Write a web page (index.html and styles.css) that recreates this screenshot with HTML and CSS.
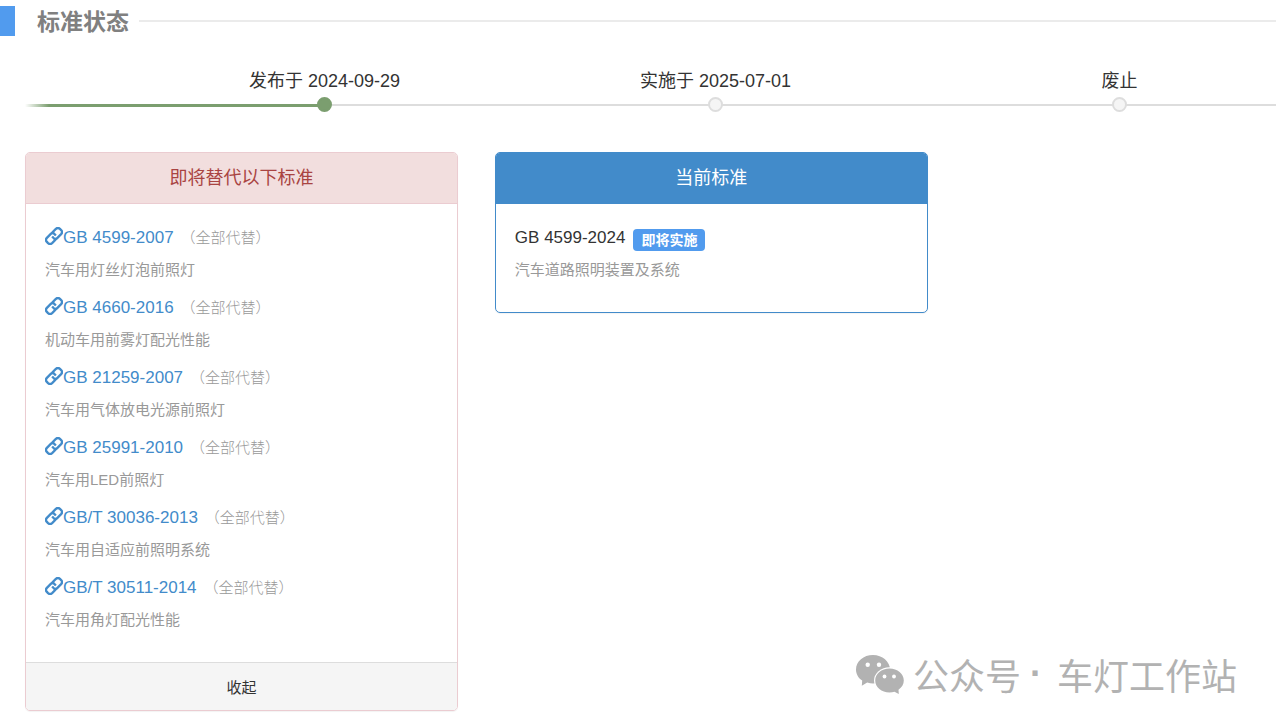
FILE: index.html
```html
<!DOCTYPE html>
<html lang="zh-CN">
<head>
<meta charset="utf-8">
<meta name="viewport" content="width=device-width, initial-scale=1">
<title>标准状态</title>
<link rel="stylesheet" href="styles.css">
</head>
<body>
<svg class="sprite" aria-hidden="true">
  <symbol id="chain" viewBox="0.5 0.5 23 23">
    <g fill="none" stroke="currentColor" stroke-width="3" stroke-linejoin="round">
      <path d="M9.600 12.600l1.900 2a3.300 3.300 0 0 0 4.600 0l5-5a3.800 3.800 0 0 0 0-5.200l-1.500-1.500a3.800 3.800 0 0 0-5.200 0l-4.600 4.600"/>
      <path d="M14.400 11.400l-1.900-2a3.300 3.300 0 0 0-4.600 0l-5 5a3.800 3.800 0 0 0 0 5.200l1.500 1.500a3.800 3.800 0 0 0 5.200 0l4.600-4.600"/>
    </g>
  </symbol>
</svg>
<main class="page">
  <header class="section-head">
    <h1 class="section-title">标准状态</h1>
  </header>

  <ol class="timeline">
    <li class="step done"><span class="step-label">发布于 2024-09-29</span><span class="dot"></span></li>
    <li class="step"><span class="step-label">实施于 2025-07-01</span><span class="dot"></span></li>
    <li class="step"><span class="step-label">废止</span><span class="dot"></span></li>
  </ol>

  <div class="cards">
    <section class="card card-replaced">
      <h2 class="card-head">即将替代以下标准</h2>
      <ul class="list">
        <li><div class="code"><a href="#"><svg class="icon"><use href="#chain"/></svg>GB 4599-2007</a><span class="note">（全部代替）</span></div><p class="desc">汽车用灯丝灯泡前照灯</p></li>
        <li><div class="code"><a href="#"><svg class="icon"><use href="#chain"/></svg>GB 4660-2016</a><span class="note">（全部代替）</span></div><p class="desc">机动车用前雾灯配光性能</p></li>
        <li><div class="code"><a href="#"><svg class="icon"><use href="#chain"/></svg>GB 21259-2007</a><span class="note">（全部代替）</span></div><p class="desc">汽车用气体放电光源前照灯</p></li>
        <li><div class="code"><a href="#"><svg class="icon"><use href="#chain"/></svg>GB 25991-2010</a><span class="note">（全部代替）</span></div><p class="desc">汽车用LED前照灯</p></li>
        <li><div class="code"><a href="#"><svg class="icon"><use href="#chain"/></svg>GB/T 30036-2013</a><span class="note">（全部代替）</span></div><p class="desc">汽车用自适应前照明系统</p></li>
        <li><div class="code"><a href="#"><svg class="icon"><use href="#chain"/></svg>GB/T 30511-2014</a><span class="note">（全部代替）</span></div><p class="desc">汽车用角灯配光性能</p></li>
      </ul>
      <button class="card-foot" type="button">收起</button>
    </section>

    <section class="card card-current">
      <h2 class="card-head">当前标准</h2>
      <ul class="list">
        <li><div class="code">GB 4599-2024<span class="badge">即将实施</span></div><p class="desc">汽车道路照明装置及系统</p></li>
      </ul>
    </section>
  </div>

  <div class="watermark">
    <svg class="wechat" viewBox="0 0 48 39" aria-hidden="true">
      <path fill="#b2b2b2" d="M17 0C7.600 0 0 6.300 0 14.500c0 4.500 2.300 8.500 6.200 11.100L5.800 30.800l5.400-3.300c1.900.6 3.900.9 5.800.9 9.400 0 17-6.300 17-14S26.400 0 17 0z"/>
      <ellipse cx="33.500" cy="25.500" rx="15.500" ry="13.200" fill="#fff"/>
      <path fill="#b2b2b2" d="M33.500 13.500c-7.900 0-14.300 5.300-14.300 12s6.400 12 14.300 12c1.800 0 3.400-.3 5-.8l4.300 2.300-.3-4.300c3.300-2.200 5.300-5.500 5.300-9.200 0-6.700-6.400-12-14.300-12z"/>
      <g fill="#fff"><circle cx="11.700" cy="9.800" r="2.200"/><circle cx="23" cy="9.800" r="2.200"/><circle cx="28.500" cy="21.500" r="1.900"/><circle cx="38" cy="21.500" r="1.900"/></g>
    </svg>
    <span>公众号</span><span class="sep">·</span><span>车灯工作站</span>
  </div>
</main>
</body>
</html>
```

FILE: styles.css
```css
* { box-sizing: border-box; }

body {
  margin: 0;
  background: #fff;
  color: #333;
  font-family: "Liberation Sans", "Noto Sans CJK SC", sans-serif;
  font-size: 15px;
}

h1, h2, p, ul, ol { margin: 0; padding: 0; list-style: none; }

.sprite { display: none; }

.page {
  position: relative;
  min-height: 100vh;
  padding: 6px 0 16px;
  overflow: hidden;
}

.section-head {
  display: flex;
  align-items: center;
  gap: 10px;
  height: 30px;
  padding-left: 22px;
  border-left: 15px solid #519bee;
}

.section-head::after {
  content: "";
  flex: 1;
  height: 2px;
  background: #ebebeb;
}

.section-title {
  padding-top: 2px;
  color: #808080;
  font-size: 23px;
  line-height: 30px;
}

/* The last step runs past the right edge of the page. */
.timeline {
  position: relative;
  display: grid;
  grid-template-columns: 391fr 391fr 417fr;
  margin: 30px -52px 0 25px;
  padding-left: 104px;
}

.timeline::before {
  content: "";
  position: absolute;
  right: 0;
  bottom: 5px;
  left: 0;
  height: 3px;
  background:
    linear-gradient(to right, #fff, #7b9e6f 24px) 0 0 / 23% 3px no-repeat,
    linear-gradient(#ddd, #ddd) 0 0 / 100% 2px no-repeat;
}

.step {
  position: relative;
  display: flex;
  flex-direction: column;
  align-items: center;
}

.step-label {
  padding-bottom: 1px;
  font-size: 18px;
  line-height: 30px;
}

.dot {
  width: 15px;
  height: 15px;
  border: 2px solid #ddd;
  border-radius: 50%;
  background: #f5f5f5;
}

.done .dot { border-color: #7b9e6f; background: #7b9e6f; }

.cards {
  display: grid;
  grid-template-columns: 34.6% 34.6%;
  align-items: start;
  gap: 37px;
  margin-top: 40px;
  padding-left: 25px;
}

.card {
  overflow: hidden;
  border: 1px solid #ebccd1;
  border-radius: 5px;
  box-shadow: 0 1px 1px rgba(0, 0, 0, .05);
}

.card-head {
  border-bottom: 1px solid #ebccd1;
  background: #f2dede;
  color: #a94442;
  font-size: 18px;
  font-weight: 400;
  line-height: 50px;
  text-align: center;
}

.card-current { border-color: #428bca; }
.card-current .card-head { border-color: #428bca; background: #428bca; color: #fff; }

.list { padding: 18px 19px 20px; }
.list li { padding-bottom: 6px; }

.code {
  display: flex;
  align-items: baseline;
  height: 32px;
  font-size: 17px;
  line-height: 32px;
}

.code a { color: #428bca; text-decoration: none; }

.icon {
  width: 18px;
  height: 18px;
  vertical-align: -2px;
}

.note {
  margin-left: 7px;
  color: #999;
  font-size: 15px;
  font-weight: 300;
}

.desc { color: #999; font-size: 15px; line-height: 32px; }

.badge {
  align-self: center;
  margin: 3px 0 0 8px;
  padding: 0 8px;
  border-radius: 4px;
  background: #519bee;
  color: #fff;
  font-size: 14px;
  font-weight: 700;
  line-height: 22px;
}

.card-foot {
  display: block;
  width: 100%;
  height: 48px;
  padding: 0;
  border: 0;
  border-top: 1px solid #ddd;
  background: #f5f5f5;
  color: #333;
  font: inherit;
}

.watermark {
  position: absolute;
  right: 39px;
  bottom: 29px;
  display: flex;
  align-items: center;
  color: #b2b2b2;
  font-family: "Noto Sans CJK SC", sans-serif;
  font-size: 36px;
  line-height: 50px;
}

.wechat { width: 48px; height: 39px; margin-right: 9px; }

.sep {
  width: 36px;
  padding-right: 6px;
  font-family: "Liberation Sans", sans-serif;
  font-weight: 700;
  text-align: center;
}
```
